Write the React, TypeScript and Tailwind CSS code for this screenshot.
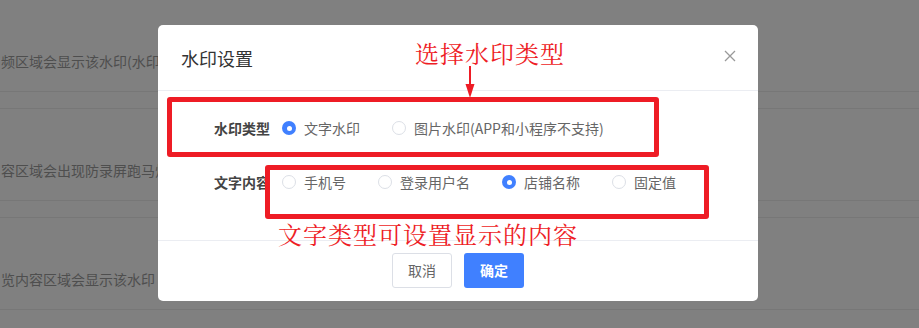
import React from "react";

const rows = [
  "频区域会显示该水印(水印内容为店铺名称)",
  "容区域会出现防录屏跑马灯效果",
  "览内容区域会显示该水印",
];

const contentOptions = [
  { label: "手机号", checked: false },
  { label: "登录用户名", checked: false },
  { label: "店铺名称", checked: true },
  { label: "固定值", checked: false },
];

const Radio: React.FC<{ checked: boolean; label: string }> = ({ checked, label }) => (
  <label className="flex items-center gap-2 mr-8 text-[14px] text-[#666]">
    {checked ? (
      <span className="w-[14px] h-[14px] rounded-full bg-[#4080ff] flex items-center justify-center">
        <span className="w-[5px] h-[5px] rounded-full bg-white" />
      </span>
    ) : (
      <span className="w-[14px] h-[14px] rounded-full border border-[#dcdfe6] bg-white" />
    )}
    <span>{label}</span>
  </label>
);

export default function App() {
  return (
    <div className="relative w-[919px] h-[328px] overflow-hidden bg-[#808080] font-['Noto_Sans_CJK_SC','Noto_Sans',sans-serif]">
      {/* page behind the mask */}
      <div className="flex flex-col">
        {rows.map((text, i) => (
          <div key={i} className="flex flex-col">
            {i > 0 && <div className="h-[17px] border-b border-[#777]" />}
            <div className="h-[92px] flex items-end pb-[20px] pl-[1px] border-b border-[#777] text-[14px] leading-[20px] text-[#4e4e4e] whitespace-nowrap">
              {text}
            </div>
          </div>
        ))}
      </div>

      {/* dialog */}
      <div className="absolute left-[158px] top-[25px] w-[600px] h-[276px] bg-white rounded-[5px] flex flex-col">
        <div className="h-[66px] shrink-0 flex items-center justify-between pl-[23px] pr-[22px] border-b border-[#ebedf2]">
          <span className="text-[18px] text-[#333] pt-[1px]">水印设置</span>
          <svg width="12" height="12" viewBox="0 0 12 12" className="mb-[4px]">
            <path d="M1 1L11 11M11 1L1 11" stroke="#999" strokeWidth="1.3" />
          </svg>
        </div>

        <div className="flex flex-col shrink-0 pt-[21px] pb-[42px] gap-[22px]">
          <div className="flex items-center h-[32px]">
            <div className="w-[124px] pr-3 text-right text-[14px] font-bold text-[#444]">水印类型</div>
            <Radio checked label="文字水印" />
            <Radio checked={false} label="图片水印(APP和小程序不支持)" />
          </div>
          <div className="flex items-center h-[32px]">
            <div className="w-[124px] pr-3 text-right text-[14px] font-bold text-[#444]">文字内容</div>
            {contentOptions.map((o) => (
              <Radio key={o.label} checked={o.checked} label={o.label} />
            ))}
          </div>
        </div>

        <div className="flex-1 border-t border-[#ebedf2] flex justify-center gap-3 pt-[12px]">
          <button className="w-[60px] h-[35px] rounded-[3px] border border-[#dcdfe6] bg-white text-[14px] text-[#666]">
            取消
          </button>
          <button className="w-[60px] h-[35px] rounded-[3px] bg-[#4080ff] text-[14px] font-bold text-white">
            确定
          </button>
        </div>

        {/* red annotations */}
        <div className="absolute left-[9px] top-[72px] w-[492px] h-[60px] border-[5px] border-[#ee1c25] rounded-[3px]" />
        <div className="absolute left-[107px] top-[140px] w-[444px] h-[54px] border-[5px] border-[#ee1c25] rounded-[3px]" />
        <div className="absolute left-[257px] top-[15px] text-[24px] leading-[26px] tracking-[1px] text-[#ee1c25] font-['Noto_Serif_CJK_SC','Noto_Sans_CJK_SC',serif]">
          选择水印类型
        </div>
        <svg className="absolute left-[307px] top-[41px]" width="10" height="32" viewBox="0 0 10 32">
          <path d="M5 0V20" stroke="#ee1c25" strokeWidth="2" />
          <path d="M0.5 18L5 32L9.5 18Z" fill="#ee1c25" />
        </svg>
        <div className="absolute left-[120px] top-[196px] text-[24px] leading-[26px] tracking-[1px] text-[#ee1c25] font-['Noto_Serif_CJK_SC','Noto_Sans_CJK_SC',serif]">
          文字类型可设置显示的内容
        </div>
      </div>
    </div>
  );
}
